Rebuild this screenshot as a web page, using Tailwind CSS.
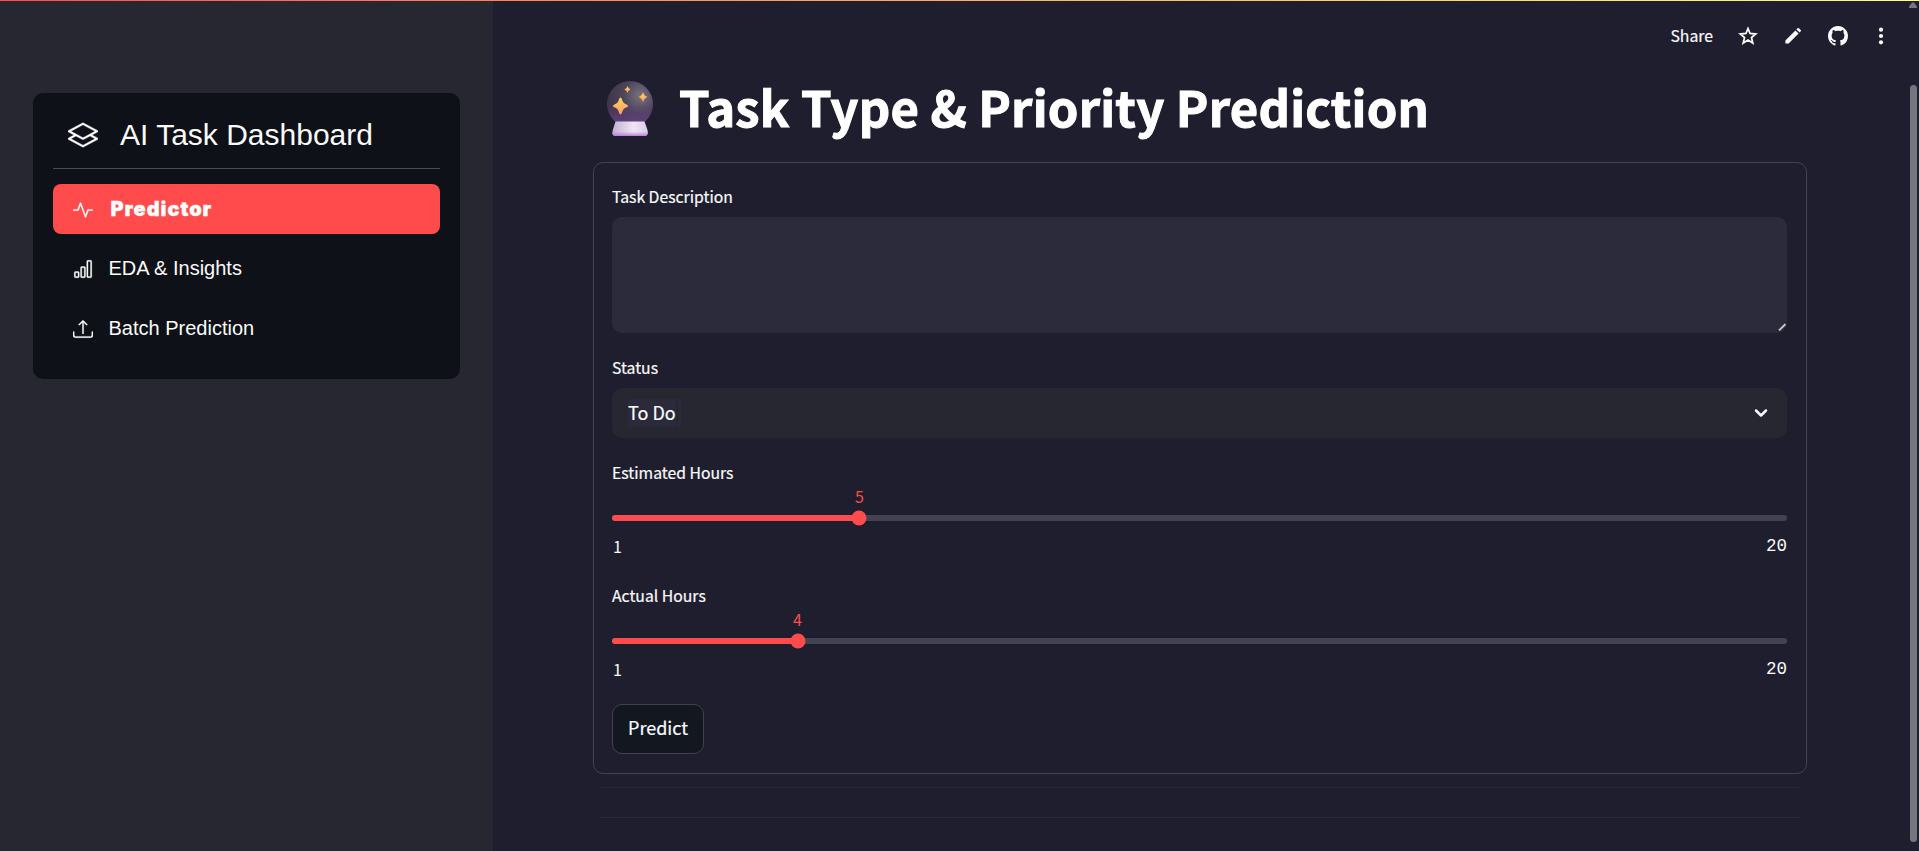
<!DOCTYPE html>
<html lang="en">
<head>
<meta charset="utf-8">
<title>AI Task Dashboard</title>
<script src="https://cdn.jsdelivr.net/npm/@tailwindcss/browser@4"></script>
</head>
<body class="relative flex h-[851px] w-[1919px] overflow-hidden bg-[#1f1e2e] font-['Noto_Sans_CJK_SC','Noto_Sans',sans-serif] text-[#fafafa]">
<div class="absolute inset-x-0 top-0 z-10 h-px bg-linear-to-r from-[#ff4b4b] to-[#ffff80]"></div>

<aside class="h-full w-[493px] shrink-0 bg-[#262730] pl-[33px] pt-[93px] font-['Liberation_Sans',Arial,sans-serif]">
  <div class="h-[286px] w-[427px] rounded-[10px] bg-[#0e1117] px-5">
    <div class="flex h-[76px] items-center border-b border-[#4a4c51] pt-[9px] pl-[15px]">
      <svg class="mt-[-1px] size-[30px]" viewBox="0 0 16 16" fill="#fff" stroke="#fff" stroke-width=".2"><path d="M8.235 1.559a.5.5 0 0 0-.47 0l-7.5 4a.5.5 0 0 0 0 .882L3.188 8 .264 9.559a.5.5 0 0 0 0 .882l7.5 4a.5.5 0 0 0 .47 0l7.5-4a.5.5 0 0 0 0-.882L12.813 8l2.922-1.559a.5.5 0 0 0 0-.882zm3.515 7.008L14.438 10 8 13.433 1.562 10 4.25 8.567l3.515 1.874a.5.5 0 0 0 .47 0zM8 9.433 1.562 6 8 2.567 14.438 6z"/></svg>
      <h1 class="ml-[22px] text-[30px] leading-[44px] whitespace-nowrap">AI Task Dashboard</h1>
    </div>
    <nav class="mt-[15px] flex flex-col gap-[10px] text-[20px]">
      <a class="flex h-[50px] items-center rounded-[8px] bg-[#ff4b4b] pl-5">
        <svg class="mt-[2px] size-5" viewBox="0 0 16 16" fill="#fff" stroke="#fff" stroke-width=".25"><path fill-rule="evenodd" d="M6 2a.5.5 0 0 1 .47.33L10 12.036l1.53-4.208A.5.5 0 0 1 12 7.5h3.5a.5.5 0 0 1 0 1h-3.15l-1.88 5.17a.5.5 0 0 1-.94 0L6 3.964 4.47 8.171A.5.5 0 0 1 4 8.5H.5a.5.5 0 0 1 0-1h3.15l1.88-5.17A.5.5 0 0 1 6 2"/></svg>
        <span class="ml-[17.5px] font-['Inter',sans-serif] text-[20px] font-black tracking-[0.95px] text-white [-webkit-text-stroke:0.3px_#fff]">Predictor</span>
      </a>
      <a class="flex h-[50px] items-center pl-5">
        <svg class="size-5" viewBox="0 0 16 16" fill="#fff" stroke="#fff" stroke-width=".25"><path d="M4 11H2v3h2zm5-4H7v7h2zm5-5v12h-2V2zm-2-1a1 1 0 0 0-1 1v12a1 1 0 0 0 1 1h2a1 1 0 0 0 1-1V2a1 1 0 0 0-1-1zM6 7a1 1 0 0 1 1-1h2a1 1 0 0 1 1 1v7a1 1 0 0 1-1 1H7a1 1 0 0 1-1-1zm-5 4a1 1 0 0 1 1-1h2a1 1 0 0 1 1 1v3a1 1 0 0 1-1 1H2a1 1 0 0 1-1-1z"/></svg>
        <span class="mb-[2px] ml-[15.5px]">EDA &amp; Insights</span>
      </a>
      <a class="flex h-[50px] items-center pl-5">
        <svg class="size-5" viewBox="0 0 16 16" fill="#fff" stroke="#fff" stroke-width=".25"><path d="M.5 9.9a.5.5 0 0 1 .5.5v2.5a1 1 0 0 0 1 1h12a1 1 0 0 0 1-1v-2.5a.5.5 0 0 1 1 0v2.5a2 2 0 0 1-2 2H2a2 2 0 0 1-2-2v-2.5a.5.5 0 0 1 .5-.5"/><path d="M7.646 1.146a.5.5 0 0 1 .708 0l3 3a.5.5 0 0 1-.708.708L8.5 2.707V11.500a.5.5 0 0 1-1 0V2.707L5.354 4.854a.5.5 0 1 1-.708-.708z"/></svg>
        <span class="mb-[2px] ml-[15.5px]">Batch Prediction</span>
      </a>
    </nav>
  </div>
</aside>

<main class="flex min-w-0 flex-1 flex-col">
  <header class="flex h-[71px] shrink-0 items-center justify-end pr-[28px]">
    <span class="mr-[25px] text-[15.8px] leading-6 [-webkit-text-stroke:0.2px_#fafafa]">Share</span>
    <svg class="mr-[25px] size-5" viewBox="0 0 20 20" fill="none" stroke="#fafafa" stroke-width="1.8" stroke-linejoin="miter"><path d="M10 2.6 12.1 7.5 17.7 8 13.5 11.600 14.800 17 10 14.100 5.200 17 6.500 11.600 2.300 8 7.900 7.500Z"/></svg>
    <svg class="mr-[25px] size-5" viewBox="0 0 20 20" fill="#fafafa"><path d="M2.400 14.400 12.400 4.400 15.600 7.600 5.600 17.600H2.400ZM13.400 3.400 14.700 2.100Q15.300 1.700 15.900 2.200L17.700 4.000Q18.300 4.700 17.800 5.300L16.500 6.600Z"/></svg>
    <svg class="mr-[23px] size-5" viewBox="0 0 16 16" fill="#fafafa"><path d="M8 0C3.58 0 0 3.58 0 8c0 3.540 2.290 6.530 5.470 7.590.4.070.55-.17.55-.38 0-.19-.01-.82-.01-1.490-2.010.37-2.530-.49-2.690-.94-.09-.23-.48-.94-.82-1.130-.28-.15-.68-.52-.01-.53.63-.01 1.080.58 1.230.82.72 1.210 1.870.87 2.330.66.070-.52.28-.87.51-1.070-1.780-.2-3.640-.89-3.640-3.950 0-.87.31-1.590.82-2.150-.08-.2-.36-1.020.08-2.120 0 0 .67-.21 2.200.82.64-.18 1.320-.27 2-.27s1.360.09 2 .27c1.530-1.040 2.200-.82 2.200-.82.44 1.100.16 1.920.08 2.120.51.56.82 1.270.82 2.150 0 3.070-1.870 3.750-3.650 3.950.29.25.54.73.54 1.480 0 1.070-.01 1.930-.01 2.200 0 .21.15.46.55.38A8 8 0 0 0 16 8c0-4.420-3.580-8-8-8"/></svg>
    <svg class="size-5" viewBox="0 0 20 20" fill="#fafafa"><circle cx="10" cy="3.700" r="2.100"/><circle cx="10" cy="10" r="2.100"/><circle cx="10" cy="16.300" r="2.100"/></svg>
  </header>

  <div class="ml-[100px] w-[1214px]">
    <div class="flex h-[91px] items-center pb-[22px] pl-[13px]">
      <svg class="mt-[4px] h-[56px] w-[48px] shrink-0" viewBox="0 0 48 56">
        <defs>
          <radialGradient id="ball" cx=".72" cy=".32" r=".75"><stop offset="0" stop-color="#77727f"/><stop offset=".5" stop-color="#4c4559"/><stop offset="1" stop-color="#3b3447"/></radialGradient>
          <linearGradient id="glow" x1="0" y1="0" x2="0" y2="1"><stop offset=".5" stop-color="#633c80" stop-opacity="0"/><stop offset="1" stop-color="#6a4189"/></linearGradient>
          <linearGradient id="base" x1="0" y1="0" x2="1" y2="0"><stop offset="0" stop-color="#c2aed2"/><stop offset=".6" stop-color="#efe5f5"/><stop offset="1" stop-color="#d9cce5"/></linearGradient>
          <linearGradient id="foot" x1="0" y1="0" x2="0" y2="1"><stop offset=".7" stop-color="#c07fe0" stop-opacity="0"/><stop offset="1" stop-color="#bd79dc"/></linearGradient>
          <linearGradient id="star" x1="0" y1="0" x2="0" y2="1"><stop offset="0" stop-color="#ffd45a"/><stop offset="1" stop-color="#ff9a68"/></linearGradient>
        </defs>
        <circle cx="24" cy="24" r="23" fill="url(#ball)"/><circle cx="24" cy="24" r="23" fill="url(#glow)"/>
        <path d="M9.500 41.500H38.500L41.500 50Q43 56 38 56H10Q5 56 6.800 50Z" fill="url(#base)"/>
        <path d="M9.500 41.500H38.500L41.500 50Q43 56 38 56H10Q5 56 6.800 50Z" fill="url(#foot)"/>
        <g fill="url(#star)"><path d="M14.500 17.500Q15.500 17.500 16 19.500 17 23.300 20 24.300 22 25 22 26 22 27 20 27.600 17 28.600 16 32.500 15.500 34.500 14.500 34.500 13.500 34.500 13 32.500 12 28.600 9 27.600 7 27 7 26 7 25 9 24.300 12 23.300 13 19.500 13.500 17.500 14.500 17.500Z"/><path d="M37 12Q38 16 41.500 17 38 18 37 22.500 36 18 32.500 17 36 16 37 12Z"/><path d="M21.500 6Q22.200 8.800 24.500 9.500 22.200 10.200 21.500 13 20.800 10.200 18.500 9.500 20.800 8.800 21.500 6Z"/></g>
      </svg>
      <h2 class="ml-[25px] text-[49px] leading-[66px] font-bold tracking-[0.21px] whitespace-nowrap text-white [-webkit-text-stroke:1px_#fff]">Task Type &amp; Priority Prediction</h2>
    </div>

    <form class="h-[612px] rounded-[10px] border border-[#444352] pt-[21px] pr-[19px] pl-[18px]">
      <div class="h-[28px] text-[15.75px] leading-[26px] [-webkit-text-stroke:0.2px_#fafafa]">Task Description</div>
      <div class="mt-[5px] flex h-[116px] items-end justify-end rounded-[10px] bg-[#2c2b3c] pr-[1px] pb-[2px]">
        <svg class="size-[9px]" viewBox="0 0 9 9"><path d="M0 9 9 0V3L3 9Z" fill="#15151c"/><path d="M2 8.500 8.500 2" stroke="#c4c4c8" stroke-width="2"/><path d="M7 8H8.500V6.500Z" fill="#15151c"/></svg>
      </div>
      <div class="mt-[21px] h-[28px] text-[15.75px] leading-[27px] [-webkit-text-stroke:0.2px_#fafafa]">Status</div>
      <div class="mt-[6px] flex h-[50px] items-center justify-between rounded-[10px] bg-[#262730] pr-[19px] pl-[16px]">
        <div class="flex gap-[2px] text-[18px] leading-[26px]"><span class="h-[28px] bg-[#2b2a3b] [-webkit-text-stroke:0.2px_#fafafa]">To Do</span><span class="w-[3px] bg-[#2b2a3b]"></span></div>
        <svg class="h-[10px] w-[14px]" viewBox="0 0 14 10" fill="none" stroke="#fafafa" stroke-width="2.500" stroke-linecap="round" stroke-linejoin="round"><path d="M2 2.500 7 7.500 12 2.500"/></svg>
      </div>

      <div class="mt-[21px] h-[28px] text-[15.75px] leading-[27px] [-webkit-text-stroke:0.2px_#fafafa]">Estimated Hours</div>
      <div class="relative mt-[28px] h-[6px] rounded-full bg-[#434252]">
        <div class="h-full rounded-full bg-[#ff4b4b]" style="width:21.05%"></div>
        <div class="absolute top-1/2 size-[15px] -translate-1/2 rounded-full bg-[#ff4b4b]" style="left:21.05%"></div>
        <div class="absolute -top-[31px] -translate-x-1/2 text-[16px] leading-[24px] text-[#ff4b4b]" style="left:21.05%">5</div>
      </div>
      <div class="mt-[14px] flex h-[24px] justify-between pl-px text-[16px] leading-[23px]"><span>1</span><span class="font-['Liberation_Mono',monospace] text-[17.5px]">20</span></div>

      <div class="mt-[23px] h-[28px] text-[15.75px] leading-[27px] [-webkit-text-stroke:0.2px_#fafafa]">Actual Hours</div>
      <div class="relative mt-[28px] h-[6px] rounded-full bg-[#434252]">
        <div class="h-full rounded-full bg-[#ff4b4b]" style="width:15.79%"></div>
        <div class="absolute top-1/2 size-[15px] -translate-1/2 rounded-full bg-[#ff4b4b]" style="left:15.79%"></div>
        <div class="absolute -top-[31px] -translate-x-1/2 text-[16px] leading-[24px] text-[#ff4b4b]" style="left:15.79%">4</div>
      </div>
      <div class="mt-[14px] flex h-[24px] justify-between pl-px text-[16px] leading-[23px]"><span>1</span><span class="font-['Liberation_Mono',monospace] text-[17.5px]">20</span></div>

      <button type="button" class="mt-[22px] flex h-[50px] w-[92px] items-center justify-center rounded-[10px] border border-[#41424b] bg-[#131720] pb-[4px] text-[18px] leading-[28px] [-webkit-text-stroke:0.2px_#fafafa]">Predict</button>
    </form>
    <div class="mx-[8px] mt-[13px] h-px bg-[#2b2a39]"></div>
    <div class="mx-[8px] mt-[29px] h-px bg-[#2b2a39]"></div>
  </div>
</main>

<div class="absolute top-0 right-[2px] flex w-[8px] flex-col items-center">
  <svg class="mt-[2px] h-[6px] w-[8px]" viewBox="0 0 8 6"><path d="M0 6V4.500L3 .5H5L8 4.500V6Z" fill="#777680"/></svg>
  <div class="mt-[77px] h-[757px] w-[7px] rounded-full bg-[#777680]"></div>
</div>
</body>
</html>
